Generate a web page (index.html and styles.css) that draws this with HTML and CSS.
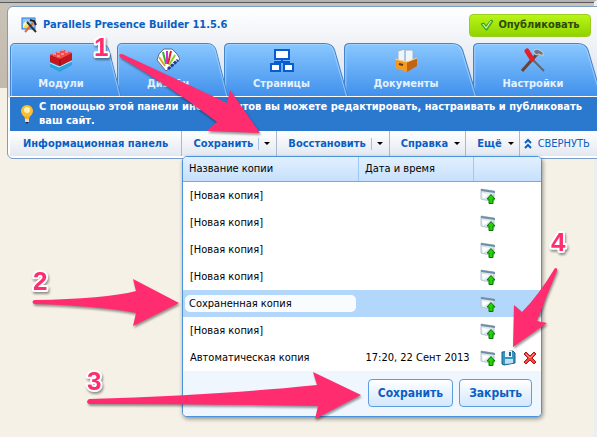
FILE: index.html
```html
<!DOCTYPE html>
<html lang="ru">
<head>
    <meta charset="UTF-8">
    <meta name="viewport" content="width=device-width, initial-scale=1.0">
    <title>Parallels Presence Builder</title>
    <link rel="stylesheet" href="styles.css">
</head>
<body>
    <svg class="sprite" aria-hidden="true">
        <linearGradient id="tabFill" x1="0" y1="0" x2="0" y2="1">
            <stop offset="0" stop-color="#8ac8ff"/>
            <stop offset="1" stop-color="#3f8fec"/>
        </linearGradient>
        <symbol id="tabShape" viewBox="0 0 112 53" preserveAspectRatio="none">
            <path d="M.5 54V5Q.5.500 5 .5H90Q97 .5 99 7L111 54z" fill="url(#tabFill)" stroke="#4484cc"/>
            <path d="M1.500 54V6Q1.500 1.500 6 1.500H90Q96 1.500 98 7L110 54" fill="none" stroke="#a9d6ff" stroke-opacity=".7"/>
        </symbol>
        <symbol id="upload" viewBox="0 0 16 16">
            <path d="M1 1l13 2v10l-9-1-4-1z" fill="#dbe6ec" stroke="#b5c5cf"/>
            <path d="M1 1l14 2v2L1 3z" fill="#6f8da3"/>
            <path d="M2 5l8 1-7 5z" fill="#fff"/>
            <path d="M11 6.500l4 4.500h-2v4.500H9V11H7z" fill="#1fd400" stroke="#0b7305"/>
        </symbol>
        <symbol id="caret" viewBox="0 0 6 3">
            <path d="M0 0h6L3 3z"/>
        </symbol>
    </svg>

    <div class="page">
        <div class="panel">
            <header class="top">
                <svg class="logo" viewBox="0 0 16 16">
                    <rect x="1" y="1" width="13" height="11" fill="#8cc7ff" stroke="#2b78d8"/>
                    <path d="M2 11V7l3-3 4 7z" fill="#fff3c0"/>
                    <path d="M2 11l3-4 4 4z" fill="#ffd84a"/>
                    <path d="M4 15L12 6" stroke="#e86a1a" stroke-width="2"/>
                    <path d="M6 5l9 10" stroke="#333" stroke-width="2"/>
                    <path d="M9 3l4 1 2 4" stroke="#222" stroke-width="2" fill="none"/>
                </svg>
                <h1>Parallels Presence Builder 11.5.6</h1>
                <button type="button" class="publish">
                    <svg viewBox="0 0 14 12"><path d="M1 5l3-1 2 3 5-6 2 1-6 9H6z" fill="#5ccb3c" stroke="#3a9a1c"/><path d="M3 5l3 4 5-7" fill="none" stroke="#d6f7c4"/></svg>
                    Опубликовать
                </button>
            </header>

            <nav class="tabs">
                <a href="#modules" class="tab t-modules">
                    <svg class="shape"><use href="#tabShape"/></svg>
                    <svg class="icon" viewBox="0 0 24 24">
                        <path d="M1 13l9 4 13-6v6l-12 7-10-5z" fill="#2ba3e0"/>
                        <path d="M1 15l9 4 13-6" stroke="#c5edff" fill="none"/>
                        <path d="M1 7l13-5 9 3v7l-12 6-10-4z" fill="#c4161c"/>
                        <path d="M1 7l13-5 9 3-12 6z" fill="#f2494c"/>
                        <path d="M4 6h3M8 4h3M12 2h3M8 8h3M12 6h3M16 4h3" stroke="#ff8d86" stroke-width="2"/>
                        <path d="M11 11v7" stroke="#8c0b10"/>
                    </svg>
                    <span>Модули</span>
                </a>
                <a href="#design" class="tab t-design">
                    <svg class="shape"><use href="#tabShape"/></svg>
                    <svg class="icon" viewBox="0 0 24 24">
                        <path d="M10 23L1 12l2-6 5-5h8l5 5 3 5z" fill="#fff" stroke="#668"/>
                        <path d="M9 18L3 9" stroke="#e7a21c" stroke-width="2"/>
                        <path d="M10 16L7 4" stroke="#2bb52b" stroke-width="2"/>
                        <path d="M11 16V3" stroke="#d82bd8" stroke-width="2"/>
                        <path d="M12 16l3-13" stroke="#e3232c" stroke-width="2"/>
                        <path d="M13 17l6-10" stroke="#8ad421" stroke-width="2"/>
                        <path d="M12 21l10-9" stroke="#1c3f9e" stroke-width="3" stroke-dasharray="3 1"/>
                    </svg>
                    <span>Дизайн</span>
                </a>
                <a href="#pages" class="tab t-pages">
                    <svg class="shape"><use href="#tabShape"/></svg>
                    <svg class="icon" viewBox="0 0 24 24">
                        <g fill="#fff" stroke="#0b5bd0" stroke-width="2">
                            <path d="M12 11v3M5 16v-2h14v2" fill="none"/>
                            <rect x="5" y="2" width="14" height="9"/>
                            <rect x="1" y="16" width="9" height="7"/>
                            <rect x="14" y="16" width="9" height="7"/>
                        </g>
                    </svg>
                    <span>Страницы</span>
                </a>
                <a href="#documents" class="tab t-documents">
                    <svg class="shape"><use href="#tabShape"/></svg>
                    <svg class="icon" viewBox="0 0 24 24">
                        <path d="M4 3l7-2v14H4zM11 2h8v12h-8z" fill="#eef5fb" stroke="#9ab4cc"/>
                        <path d="M1 11l12 3v10L1 20z" fill="#f49a22"/>
                        <path d="M13 14l10-4v8l-10 6z" fill="#c46410"/>
                        <path d="M1 11l12 3 10-4" stroke="#ffd18a" fill="none"/>
                        <path d="M5 16l4 1" stroke="#5b3a12" stroke-width="2"/>
                    </svg>
                    <span>Документы</span>
                </a>
                <a href="#settings" class="tab t-settings">
                    <svg class="shape"><use href="#tabShape"/></svg>
                    <svg class="icon" viewBox="0 0 24 24">
                        <path d="M1 23L17 5" stroke="#6b4334" stroke-width="3"/>
                        <path d="M11 11l12 12" stroke="#5f6670" stroke-width="2"/>
                        <path d="M6 3l5 8" stroke="#e3202a" stroke-width="5" stroke-linecap="round"/>
                        <path d="M12 3l4-2 6 3v4l-4-2-3 1z" fill="#6c7580" stroke="#c8d0d8"/>
                    </svg>
                    <span>Настройки</span>
                </a>
            </nav>

            <div class="hint">
                <svg class="bulb" viewBox="0 0 14 20">
                    <circle cx="7" cy="7" r="6" fill="#ffbe2e"/>
                    <circle cx="7" cy="6" r="3" fill="#fff3b8"/>
                    <path d="M4 12h6l-1 3H5z" fill="#ffb01c"/>
                    <path d="M5 15h4v3H5z" fill="#d8dde2"/>
                    <path d="M5 18h4l-2 2z" fill="#333"/>
                </svg>
                <p>С помощью этой панели инструментов вы можете редактировать, настраивать и публиковать ваш сайт.</p>
            </div>

            <div class="toolbar">
                <a href="#info" class="item info">Информационная панель</a>
                <button type="button" class="item split">Сохранить<i></i><svg><use href="#caret"/></svg></button>
                <button type="button" class="item split">Восстановить<i></i><svg><use href="#caret"/></svg></button>
                <button type="button" class="item">Справка<svg><use href="#caret"/></svg></button>
                <button type="button" class="item">Ещё<svg><use href="#caret"/></svg></button>
                <a href="#collapse" class="collapse">
                    <svg viewBox="0 0 8 12"><path d="M1 5l3-3 3 3M1 10l3-3 3 3" fill="none" stroke="#0a5fc4" stroke-width="2"/></svg>
                    СВЕРНУТЬ
                </a>

                <form class="copies">
                    <table>
                        <thead>
                            <tr><th class="name">Название копии</th><th class="date">Дата и время</th><th></th></tr>
                        </thead>
                        <tbody>
                            <tr><td>[Новая копия]</td><td></td><td><button type="button" class="act" aria-label="Загрузить"><svg><use href="#upload"/></svg></button></td></tr>
                            <tr><td>[Новая копия]</td><td></td><td><button type="button" class="act" aria-label="Загрузить"><svg><use href="#upload"/></svg></button></td></tr>
                            <tr><td>[Новая копия]</td><td></td><td><button type="button" class="act" aria-label="Загрузить"><svg><use href="#upload"/></svg></button></td></tr>
                            <tr><td>[Новая копия]</td><td></td><td><button type="button" class="act" aria-label="Загрузить"><svg><use href="#upload"/></svg></button></td></tr>
                            <tr class="selected"><td><input type="text" aria-label="Название копии" value="Сохраненная копия"></td><td></td><td><button type="button" class="act" aria-label="Загрузить"><svg><use href="#upload"/></svg></button></td></tr>
                            <tr><td>[Новая копия]</td><td></td><td><button type="button" class="act" aria-label="Загрузить"><svg><use href="#upload"/></svg></button></td></tr>
                            <tr>
                                <td>Автоматическая копия</td>
                                <td>17:20, 22 Сент 2013</td>
                                <td>
                                    <button type="button" class="act" aria-label="Загрузить"><svg><use href="#upload"/></svg></button>
                                    <button type="button" class="act" aria-label="Скачать">
                                        <svg viewBox="0 0 16 16">
                                            <path d="M1 2l11-1 2 2v10L3 15l-2-1z" fill="#3a94c0" stroke="#1c5f86"/>
                                            <path d="M4 1h7v6H4z" fill="#e8f4fa"/>
                                            <path d="M8 2h2v4H8z" fill="#1c5f86"/>
                                            <path d="M4 9h8v4l-8 1z" fill="#b9e2f4"/>
                                        </svg>
                                    </button>
                                    <button type="button" class="act" aria-label="Удалить">
                                        <svg viewBox="0 0 16 16">
                                            <path d="M2 4l2-2 4 4 4-4 2 2-4 4 4 4-2 2-4-4-4 4-2-2 4-4z" fill="#f4463e" stroke="#b81414"/>
                                            <path d="M4 4l4 4 4-4" stroke="#ff9a90" fill="none"/>
                                        </svg>
                                    </button>
                                </td>
                            </tr>
                        </tbody>
                    </table>
                    <div class="footer">
                        <button type="button">Сохранить</button>
                        <button type="button">Закрыть</button>
                    </div>
                </form>
            </div>
        </div>
    </div>

    <!-- стрелки и номера шагов поверх панели -->
    <svg class="marks" width="597" height="437" viewBox="0 0 597 437">
        <g class="arrows">
            <path d="M122 54Q185 83 227 103L230 90 260 133 207 131 217 122Q170 86 120 57 118 54 122 54z"/>
            <path d="M34 300Q105 299 136 291L133 279 179 303 133 326 136 313Q100 306 34 304 31 302 34 300z"/>
            <path d="M89 399Q220 395 317 385L313 372 361 395 315 419 318 406Q200 404 89 404 85 402 89 399z"/>
            <path d="M555 268Q558 268 557 271 547 295 537 321L547 323 513 347 514 305 522 312Q538 296 555 268z"/>
        </g>
        <g class="nums">
            <text x="94" y="56">1</text>
            <text x="33" y="290">2</text>
            <text x="87" y="390">3</text>
            <text x="551" y="251">4</text>
        </g>
    </svg>
</body>
</html>
```
FILE: styles.css
```css
body {
    margin: 0;
    background: #f5f1e6;
    font-family: "DejaVu Sans Condensed", "DejaVu Sans", sans-serif;
    font-size: 11px;
    line-height: 14px;
    overflow-x: hidden;
}
button, input {
    font: inherit;
}
.sprite {
    position: absolute;
    width: 0;
    height: 0;
}
.page {
    box-sizing: border-box;
    min-height: 100vh;
    padding: 4px 0 0 7px;
    border-top: 2px solid #b4b4b4;
    border-right: 3px solid #eceef0;
    background: linear-gradient(#c9c2b6, #c2baad) 0 0 / 100% 86px no-repeat;
    box-shadow: inset 0 1px #5a5a5a;
}
.panel {
    margin-right: -9px;
    padding: 0 2px 2px;
    border: 1px solid #7a9cc9;
    border-radius: 6px;
    background: linear-gradient(#fff, #d8dee8 90px, #fff 91px);
}
/* шапка */
.top {
    display: flex;
    align-items: center;
    height: 36px;
    padding: 0 9px 0 11px;
}
.logo {
    width: 16px;
    height: 16px;
    margin-right: 6px;
}
h1 {
    margin: 0;
    font-size: 11px;
    color: #0a5fc4;
}
.publish {
    display: flex;
    align-items: center;
    justify-content: center;
    gap: 4px;
    width: 122px;
    height: 23px;
    margin-left: auto;
    padding: 0;
    border: 1px solid #9ccc1c;
    border-radius: 4px;
    background: linear-gradient(#b9f516, #8fd400);
    font-weight: bold;
    color: #2e4a06;
}
.publish svg {
    width: 14px;
    height: 12px;
}
/* вкладки */
.tabs {
    display: flex;
    height: 53px;
    overflow: hidden;
}
.tab {
    position: relative;
    flex: none;
    box-sizing: border-box;
    margin-right: -5px;
    padding: 5px 10px 0 0;
    text-align: center;
    text-decoration: none;
    font-weight: bold;
    color: #e4f1ff;
}
/* каждая вкладка лежит поверх следующей */
.t-modules {
    z-index: 5;
    width: 112px;
}
.t-design {
    z-index: 4;
    width: 112px;
}
.t-pages {
    z-index: 3;
    width: 125px;
}
.t-documents {
    z-index: 2;
    width: 134px;
}
.t-settings {
    z-index: 1;
    width: 130px;
}
.shape {
    position: absolute;
    left: 0;
    top: 0;
    width: 100%;
    height: 53px;
}
.icon, .tab span {
    position: relative;
    display: block;
    margin: 0 auto;
}
.icon {
    width: 24px;
    height: 24px;
    margin-bottom: 5px;
}
/* подсказка */
.hint {
    display: flex;
    align-items: center;
    gap: 5px;
    height: 34px;
    padding: 0 10px;
    border-top: 1px solid #fff;
    background: #2b78cf;
    font-weight: bold;
    color: #fff;
}
.hint p {
    margin: 0;
}
.bulb {
    flex: none;
    width: 14px;
    height: 20px;
}
/* панель инструментов */
.toolbar {
    position: relative;
    z-index: 6;
    display: flex;
    height: 25px;
    background: linear-gradient(#fff, #e3e8f0);
}
.item {
    display: flex;
    align-items: center;
    gap: 6px;
    padding: 0 5px 0 11px;
    border: 0;
    border-right: 1px solid #a9b9cc;
    background: none;
    text-decoration: none;
    font-weight: bold;
    color: #0a5fc4;
}
.info {
    padding: 0 13px;
}
.item svg {
    width: 6px;
    height: 3px;
}
.split {
    gap: 5px;
    padding-right: 6px;
}
.item i {
    width: 1px;
    height: 12px;
    background: #9fc3ec;
}
.collapse {
    display: flex;
    align-items: center;
    gap: 6px;
    padding-left: 4px;
    text-decoration: none;
    color: #0a5fc4;
}
.collapse svg {
    width: 8px;
    height: 12px;
}
/* список копий */
.copies {
    position: absolute;
    left: 172px;
    top: 25px;
    width: 358px;
    border: 1px solid #4a92dc;
    border-radius: 5px;
    background: #fff;
    box-shadow: 1px 2px 4px rgba(0, 0, 0, 0.4);
    overflow: hidden;
}
.copies table {
    width: 100%;
    border-collapse: collapse;
    table-layout: fixed;
}
.copies th {
    height: 24px;
    padding: 0 6px;
    border-bottom: 1px solid #6dacea;
    border-right: 1px solid #9ccaf5;
    background: linear-gradient(#e2f0ff, #c6e0fc);
    text-align: left;
    font-weight: normal;
}
.copies th:last-child {
    border-right: 0;
}
.name {
    width: 163px;
}
.date {
    width: 102px;
}
.copies td {
    height: 27px;
    padding: 0 7px;
    white-space: nowrap;
}
.selected {
    background: #b3d6fb;
}
.copies input {
    box-sizing: border-box;
    width: 171px;
    height: 17px;
    margin-left: -5px;
    padding: 0 4px;
    border: 0;
    border-radius: 5px;
    background: #f8fcff;
}
.copies td:last-child {
    padding-left: 6px;
    font-size: 0;
}
.act {
    width: 16px;
    height: 16px;
    margin-right: 5px;
    padding: 0;
    border: 0;
    background: none;
    vertical-align: middle;
}
.act svg {
    display: block;
    width: 16px;
    height: 16px;
}
.footer {
    display: flex;
    justify-content: flex-end;
    gap: 6px;
    padding: 8px 9px 9px;
    background: #eff6fe;
}
.footer button {
    height: 28px;
    padding: 0 9px;
    border: 1px solid #5b9de0;
    border-radius: 4px;
    background: linear-gradient(#fff, #d3e7fc);
    font-size: 12px;
    font-weight: bold;
    color: #0a5fc4;
}
/* пометки */
.marks {
    position: absolute;
    left: 0;
    top: 0;
    z-index: 7;
    pointer-events: none;
    filter: drop-shadow(1px 2px 1px rgba(0, 0, 0, 0.4));
}
.arrows {
    fill: #ff2d6f;
}
.nums {
    font: bold 26px "Liberation Sans", sans-serif;
    fill: #ff2d6f;
    stroke: #fff;
    stroke-width: 4px;
    stroke-linejoin: round;
    paint-order: stroke;
}
```
